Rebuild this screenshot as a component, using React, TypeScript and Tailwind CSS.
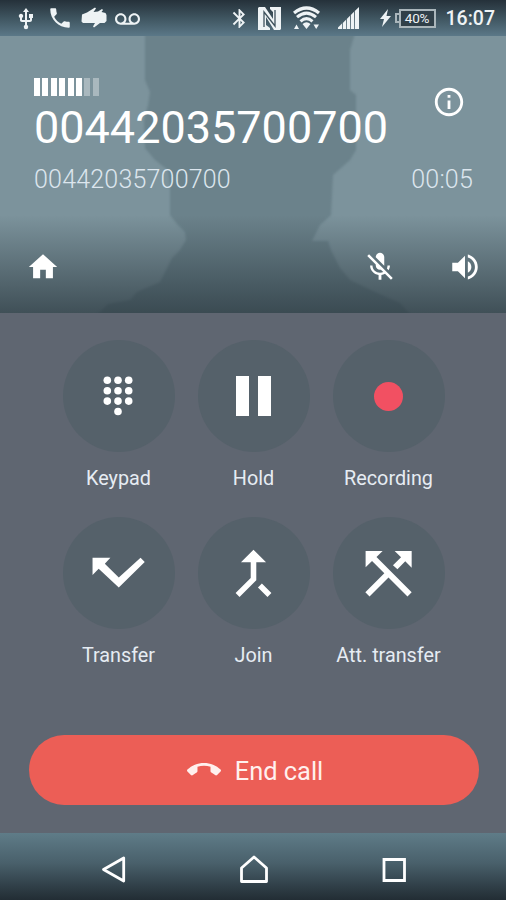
import type { ReactNode } from 'react';
import {
  MdBluetooth,
  MdCallMerge,
  MdHome,
  MdInfoOutline,
  MdUsb,
  MdVoicemail,
} from 'react-icons/md';

const CallIcon = () => (
  <svg className="ml-[9px] size-[26px]" viewBox="0 0 24 24" fill="currentColor">
    <path d="M6.62 10.79c1.44 2.83 3.76 5.14 6.59 6.59l2.2-2.2c.27-.27.67-.36 1.02-.24 1.12.37 2.33.57 3.57.57.55 0 1 .45 1 1V20c0 .55-.45 1-1 1-9.39 0-17-7.61-17-17 0-.55.45-1 1-1h3.5c.55 0 1 .45 1 1 0 1.25.2 2.45.57 3.57.11.35.03.74-.25 1.02l-2.2 2.2z" />
  </svg>
);

const MicOffIcon = () => (
  <svg className="ml-auto size-[34px]" viewBox="0 0 24 24" fill="currentColor">
    <path d="M19 11h-1.7c0 .74-.16 1.43-.43 2.05l1.23 1.23c.56-.98.9-2.09.9-3.28zm-4.02.17c0-.06.02-.11.02-.17V5c0-1.66-1.34-3-3-3S9 3.34 9 5v.18l5.98 5.99zM4.27 3L3 4.27l6.01 6.01V11c0 1.66 1.33 3 2.99 3 .22 0 .44-.03.65-.08l1.66 1.66c-.71.33-1.5.52-2.31.52-2.76 0-5.3-2.1-5.3-5.1H5c0 3.41 2.72 6.23 6 6.72V21h2v-3.28c.91-.13 1.77-.45 2.54-.9L19.73 21 21 19.73 4.27 3z" />
  </svg>
);

const SpeakerIcon = () => (
  <svg className="ml-[51px] size-[34px]" viewBox="0 0 24 24" fill="currentColor">
    <path d="M3 9v6h4l5 5V4L7 9H3zm13.500 3c0-1.770-1.020-3.290-2.500-4.030v8.050c1.480-.73 2.500-2.250 2.500-4.020zM14 3.230v2.060c2.890.86 5 3.540 5 6.710s-2.110 5.850-5 6.710v2.060c4.010-.91 7-4.490 7-8.770s-2.990-7.860-7-8.770z" />
  </svg>
);

const HangUpIcon = () => (
  <svg className="ml-[3px] size-[34px]" viewBox="0 0 24 24" fill="currentColor">
    <path d="M12 9c-1.600 0-3.150.25-4.600.72v3.100c0 .39-.23.74-.56.9-.98.49-1.870 1.120-2.660 1.850-.18.18-.43.28-.7.28-.28 0-.53-.11-.71-.29L.29 13.080c-.18-.17-.29-.42-.29-.7 0-.28.11-.53.29-.71C3.340 8.780 7.460 7 12 7s8.660 1.780 11.710 4.670c.18.18.29.43.29.71 0 .28-.11.53-.29.71l-2.480 2.480c-.18.18-.43.29-.71.29-.27 0-.52-.11-.7-.28-.79-.74-1.690-1.360-2.670-1.850-.33-.16-.56-.5-.56-.9v-3.100C15.150 9.250 13.600 9 12 9z" />
  </svg>
);

const StatusBar = () => (
  <div className="h-9 shrink-0 flex items-center bg-linear-to-b from-[#25313a] via-[#3f5560] to-[#5b7888] text-[#eef3f5]">
    <MdUsb className="ml-3.5 size-6 mt-0.5 stroke-current" />
    <CallIcon />
    {/* Notification badge */}
    <svg className="ml-2 w-[26px] h-[22px]" viewBox="0 0 26 22" fill="currentColor">
      <path d="M1 7.500L6 5.500 14 .5 15 1.500 12.500 5 17 4.500 21 2 22 3 20.500 5 24.500 6 25.500 8V14L23.500 16H19L13 20.500 12 19.500 14 16H2L.5 14.500Z" />
    </svg>
    <MdVoicemail className="ml-2 size-[25px] mt-0.5" />
    <div className="flex-1" />
    <MdBluetooth className="size-[23px] stroke-current" />
    <svg className="ml-[7px] w-[23px] h-[23px]" viewBox="0 0 23 23" fill="none">
      <path d="M0 1l1-1h6l8 12V5l-3-3V0h11v22l-1 1h-6L8 10v8l4 3v2H0z" fill="currentColor" />
      <path d="M6 20V5l11 14V3" stroke="#3f525c" strokeWidth="1.3" />
    </svg>
    <svg className="ml-[12px] w-[27px] h-[24px]" viewBox="0 0 27 24" fill="none" stroke="currentColor">
      <path d="M1 7Q13.500-3 26 7" strokeWidth="3.300" />
      <path d="M4 11.200Q13.500 3 23 11.200" strokeWidth="3" />
      <path d="M7.500 15.300Q13.500 10 19.500 15.300" strokeWidth="3" />
      <path d="M9.500 18Q13.500 14.500 17.500 18L13.500 23ZM1 23l2.500-4.500L6 23zM20.500 18.500H26L23.200 23z" fill="currentColor" stroke="none" />
    </svg>
    <svg className="ml-[18px] w-[21px] h-[22px]" viewBox="0 0 21 22" fill="currentColor">
      <path d="M0 20.500l4-4V22H0zM4.800 16l3.200-3.200V22H4.800zM8.800 12l3.200-3.200V22H8.800zM12.800 8L16 4.800V22h-3.200zM16.800 4L21 0v22h-4.200z" />
    </svg>
    <svg className="ml-[21px] w-[11px] h-[18px]" viewBox="0 0 11 18" fill="currentColor">
      <path d="M8 0L0 10h4L2 18l9-11H6.500z" />
    </svg>
    <div className="ml-1 w-1 h-2.5 border-2 border-r-0 border-[#aab6bb]" />
    <div className="w-[37px] h-[19px] flex items-center justify-center border-2 border-[#aab6bb] bg-[#304049] text-[13.5px] tracking-[-0.2px]">
      40%
    </div>
    <span className="ml-[10px] mr-[11px] mt-0.5 text-[19.5px] leading-6 font-medium">16:07</span>
  </div>
);

const SignalMeter = () => (
  <div className="flex gap-[2.400px] h-[18px]">
    {[1, 1, 1, 1, 1, 1, 0, 0].map((on, i) => (
      <div key={i} className={on ? 'w-1.5 bg-white' : 'w-1.5 bg-white/35'} />
    ))}
  </div>
);

const CallHeader = () => (
  <div className="relative h-[277px] shrink-0 bg-[#7c939c]">
    {/* Contact silhouette behind the caller details */}
    <svg className="absolute inset-0 w-full h-full" viewBox="0 36 506 277">
      <path
        className="blur-[1px]"
        fill="#6b828b"
        d="M145 30V80L150 92 148 105 144 120 145 148 155 160 168 170 170 185V215L178 225 185 232 186 240 180 250 172 258 165 272 160 282 137 292 130 300 108 304 92 320H415L400 303 375 292 350 280 340 268 331 250 328 241H312L320 225 331 215 333 175 350 160 356 150V95L350 90V50L356 30Z"
      />
    </svg>
    <div className="absolute inset-x-0 bottom-0 h-[98px] bg-linear-to-b from-[#24343c]/0 to-[#26333a]/70" />

    <div className="relative h-full flex flex-col pt-[42px]">
      <div className="flex justify-between pl-[34px] pr-10">
        <div className="h-[74px]">
          <SignalMeter />
          <h1 className="mt-[9px] text-[45px] leading-[46px] text-white">00442035700700</h1>
        </div>
        <MdInfoOutline className="mt-[7px] size-[34px] text-white" />
      </div>
      <div className="flex justify-between mt-[13px] pl-[34px] pr-[33px] text-[25px] leading-[30px] tracking-[0.2px] font-light text-[#dce6ee]">
        <span>00442035700700</span>
        <span>00:05</span>
      </div>
      <div className="flex items-center mt-[55px] pl-[26px] pr-6 text-white">
        <MdHome className="size-[34px]" />
        <MicOffIcon />
        <SpeakerIcon />
      </div>
    </div>
  </div>
);

const KeypadIcon = () => (
  <svg className="mr-0.5 w-[30px] h-10" viewBox="0 0 30 40" fill="currentColor">
    {[4.300, 14.700, 25.100, 35.500].map((y, row) =>
      [4.300, 15, 25.700].map((x, col) =>
        row < 3 || col === 1 ? <circle key={`${row}-${col}`} cx={x} cy={y} r="3.800" /> : null
      )
    )}
  </svg>
);

const TransferIcon = () => (
  <svg className="size-[67px]" viewBox="0 0 24 24" fill="currentColor">
    <path d="M2.700 6.400H9.100L7.100 8.500 12.100 13.400 19.900 6.400 21.400 7.900 12.100 17 4.900 10.300 2.700 12.500Z" />
  </svg>
);

const AttTransferIcon = () => (
  <svg className="size-[67px]" viewBox="0 0 24 24" fill="currentColor">
    <path d="M3.800 3.900H9.900L7.700 6.100 20.300 18.700 18.800 20.200 12 13.400 5.200 20.200 3.700 18.700 10.500 11.900 6.100 7.500 3.800 9.800Z" />
    <path d="M14.200 3.900H20.300V9.900L18 7.600 15.200 10.500 13.600 9 16.500 6.200Z" />
  </svg>
);

const actions: { label: string; icon: ReactNode }[] = [
  { label: 'Keypad', icon: <KeypadIcon /> },
  {
    label: 'Hold',
    icon: (
      <div className="flex gap-[9px]">
        <div className="w-[13px] h-10 bg-white" />
        <div className="w-[13px] h-10 bg-white" />
      </div>
    ),
  },
  { label: 'Recording', icon: <div className="size-[29px] rounded-full bg-[#f25062]" /> },
  { label: 'Transfer', icon: <TransferIcon /> },
  { label: 'Join', icon: <MdCallMerge className="size-[67px]" /> },
  { label: 'Att. transfer', icon: <AttTransferIcon /> },
];

const NavBar = () => (
  <div className="h-[67px] shrink-0 flex items-center justify-between pl-[101px] pr-[99px] pt-[7px] bg-linear-to-b from-[#5f7c88] via-[#49606b] via-45% to-[#222d34] text-white">
    <svg className="w-[26px] h-[30px]" viewBox="0 0 26 30" fill="none" stroke="currentColor" strokeWidth="2.800" strokeLinejoin="round">
      <path d="M2.500 14.500L22.700 3V26Z" />
    </svg>
    <svg className="w-[30px] h-[30px]" viewBox="0 0 30 30" fill="none" stroke="currentColor" strokeWidth="2.800" strokeLinejoin="round">
      <path d="M2.500 13L15 2 27.500 13V26.500H2.500Z" />
    </svg>
    <svg className="w-[26px] h-[30px]" viewBox="0 0 26 30" fill="none" stroke="currentColor" strokeWidth="2.800">
      <path d="M3 4.500H23.500V25.500H3Z" />
    </svg>
  </div>
);

const App = () => {
  return (
    <div className="w-[506px] h-[900px] flex flex-col overflow-hidden bg-[#5f6570] font-['Roboto',sans-serif]">
      <StatusBar />
      <CallHeader />

      <div className="flex-1 flex flex-col items-center pt-[27px] bg-[#5f6671]">
        <div className="grid grid-cols-3 gap-x-[23px] ml-px">
          {actions.map(({ label, icon }) => (
            <button key={label} className="w-28 h-[177px] flex flex-col items-center text-white">
              <span className="size-28 shrink-0 flex items-center justify-center rounded-full bg-[#55616a]">
                {icon}
              </span>
              <span className="mt-[15px] text-[19.8px] leading-6 whitespace-nowrap text-[#e6ecf3]">{label}</span>
            </button>
          ))}
        </div>

        <button className="mt-[41px] ml-px w-[450px] h-[70px] flex items-center justify-center gap-3.5 rounded-full bg-[#ec5e56] text-[25.4px] text-[#fff0ee]">
          <HangUpIcon />
          <span className="pt-0.5">End call</span>
        </button>
      </div>

      <NavBar />
    </div>
  );
};

export default App;
